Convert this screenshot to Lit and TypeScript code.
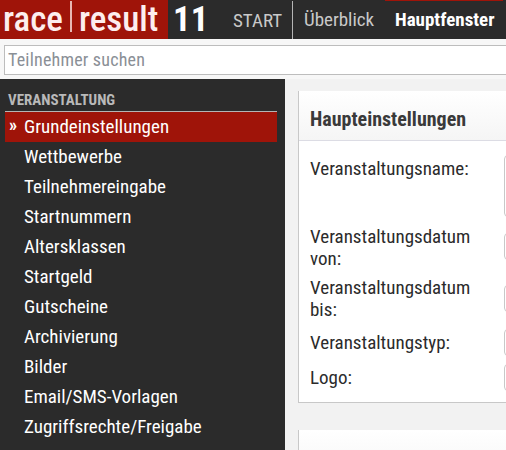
import { LitElement, html, css } from "lit";
import { customElement } from "lit/decorators.js";

const NAV = ["Grundeinstellungen","Wettbewerbe","Teilnehmereingabe","Startnummern","Altersklassen","Startgeld","Gutscheine","Archivierung","Bilder","Email/SMS-Vorlagen","Zugriffsrechte/Freigabe"];

@customElement("app-root")
export class AppRoot extends LitElement {
  static styles = css`
    :host { display: block; width: 506px; height: 450px; overflow: hidden; position: relative; background: #f2f2f2;
      font-family: "Roboto", sans-serif; font-stretch: 86%; color: #2b2b2b; }
    * { box-sizing: border-box; }
    .top { display: flex; height: 39px; background: #2b2b2b; }
    .logo { width: 168px; background: #9f1409; color: #fdeeee; display: flex; align-items: center; padding-left: 3px; font-size: 35px; font-weight: 500; flex: none; line-height: 36px; overflow: hidden; white-space: nowrap; }
    .logo .bar { width: 2px; height: 31px; background: #e8b8b4; margin: 0 7px 7px 7px; flex: none; }
    .ver { width: 61px; flex: none; color: #fff; font-size: 35px; font-weight: 700; padding-left: 5px; line-height: 39px; }
    .tabs { display: flex; font-size: 19px; }
    .tab { color: #c9c9c9; display: flex; align-items: center; white-space: nowrap; }
    .tab.start { width: 64px; padding-left: 4px; border-right: 1px solid #b5b5b5; height: 38px; margin-top: 1px; }
    .tab.over { width: 89px; padding-left: 11px; }
    .tab.cur { color: #fff; font-weight: 700; position: relative; padding-left: 13px; }
    .tab.cur::before { content: ""; position: absolute; left: 3px; width: 118px; top: 0; height: 1px; background: #9f1409; }
    .search { height: 40px; background: #f7f7f7; padding: 6px 0 0 4px; }
    .search .in { width: 600px; height: 30px; border: 1px solid #bdbdbd; color: #8a8f96; font-size: 18px; letter-spacing: .2px; line-height: 28px; padding-left: 3px; background: #fff; }
    .body { display: flex; height: 371px; }
    .side { width: 285px; flex: none; background: #2b2b2b; padding: 0 8px 0 5px; height: 371px; }
    .head { color: #b9b9b9; font-size: 15px; font-weight: 700; height: 33px; padding: 13px 0 0 3px; line-height: 16px; border-bottom: 1px solid #b5b5b5; }
    .item { height: 30px; color: #fff; font-size: 19px; line-height: 30px; padding-left: 19px; position: relative; }
    .item.on { background: #9f1409; }
    .item.on::before { content: "»"; position: absolute; left: 4px; top: -2px; font-weight: 700; font-size: 18px; }
    .main { flex: 1; padding: 12px 0 0 13px; overflow: hidden; }
    .card { width: 300px; background: #fff; border-left: 1px solid #c8c8c8; border-bottom: 1px solid #c8c8c8; height: 312px; }
    .card-h { height: 50px; background: linear-gradient(#fff, #f5f5f5); border-bottom: 1px solid #dcdce4; font-size: 20px; font-weight: 700; color: #3a3a3a; padding: 0 0 0 11px; line-height: 57px; }
    .rows { padding-left: 11px; }
    .row { display: flex; align-items: flex-start; font-size: 19px; line-height: 22px; }
    .lab { width: 194px; flex: none; color: #2b2b2b; padding-right: 20px; }
    .ctl { width: 100px; border: 1px solid #c8c8c8; border-radius: 4px; background: #fff; }
    .r1 { height: 71px; padding-top: 17px; } .r1 .ctl { height: 62px; margin-top: -3px; }
    .r2 { height: 53px; padding-top: 14px; } .r2 .ctl { height: 27px; margin-top: 7px; }
    .r3 { height: 53px; padding-top: 12px; } .r3 .ctl { height: 27px; margin-top: 8px; }
    .r4 { height: 35px; padding-top: 14px; } .r4 .ctl { height: 27px; margin-top: -3px; }
    .r5 { height: 35px; padding-top: 14px; } .r5 .ctl { height: 27px; margin-top: -3px; }
    .card2 { width: 300px; height: 50px; margin-top: 27px; background: linear-gradient(#fff, #f5f5f5); border-left: 1px solid #c8c8c8; }
  `;
  render() {
    return html`
      <div class="top">
        <div class="logo">race<span class="bar"></span>result</div>
        <div class="ver">11</div>
        <div class="tabs">
          <div class="tab start">START</div>
          <div class="tab over">Überblick</div>
          <div class="tab cur">Hauptfenster</div>
        </div>
      </div>
      <div class="search"><div class="in">Teilnehmer suchen</div></div>
      <div class="body">
        <div class="side">
          <div class="head">VERANSTALTUNG</div>
          ${NAV.map((n, i) => html`<div class="item ${i === 0 ? "on" : ""}">${n}</div>`)}
        </div>
        <div class="main">
          <div class="card">
            <div class="card-h">Haupteinstellungen</div>
            <div class="rows">
              <div class="row r1"><div class="lab">Veranstaltungsname:</div><div class="ctl"></div></div>
              <div class="row r2"><div class="lab">Veranstaltungsdatum von:</div><div class="ctl"></div></div>
              <div class="row r3"><div class="lab">Veranstaltungsdatum bis:</div><div class="ctl"></div></div>
              <div class="row r4"><div class="lab">Veranstaltungstyp:</div><div class="ctl"></div></div>
              <div class="row r5"><div class="lab">Logo:</div><div class="ctl"></div></div>
            </div>
          </div>
          <div class="card2"></div>
        </div>
      </div>
    `;
  }
}
